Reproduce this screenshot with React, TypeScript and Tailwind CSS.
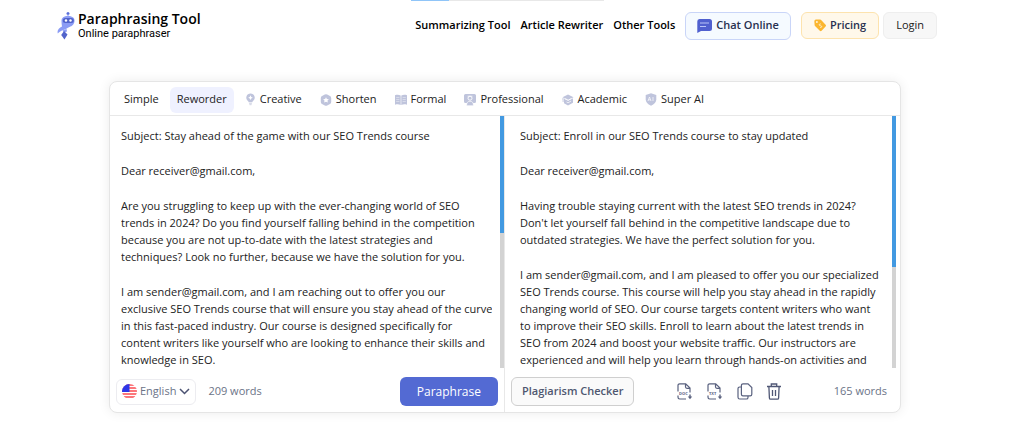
import { useState, type ReactNode } from "react";

const ICON = "#bfc4dc";

const leftText = [
  "Subject: Stay ahead of the game with our SEO Trends course",
  "Dear receiver@gmail.com,",
  "Are you struggling to keep up with the ever-changing world of SEO\ntrends in 2024? Do you find yourself falling behind in the competition\nbecause you are not up-to-date with the latest strategies and\ntechniques? Look no further, because we have the solution for you.",
  "I am sender@gmail.com, and I am reaching out to offer you our\nexclusive SEO Trends course that will ensure you stay ahead of the curve\nin this fast-paced industry. Our course is designed specifically for\ncontent writers like yourself who are looking to enhance their skills and\nknowledge in SEO.",
];

const rightText = [
  "Subject: Enroll in our SEO Trends course to stay updated",
  "Dear receiver@gmail.com,",
  "Having trouble staying current with the latest SEO trends in 2024?\nDon't let yourself fall behind in the competitive landscape due to\noutdated strategies. We have the perfect solution for you.",
  "I am sender@gmail.com, and I am pleased to offer you our specialized\nSEO Trends course. This course will help you stay ahead in the rapidly\nchanging world of SEO. Our course targets content writers who want\nto improve their SEO skills. Enroll to learn about the latest trends in\nSEO from 2024 and boost your website traffic. Our instructors are\nexperienced and will help you learn through hands-on activities and",
];

function Logo() {
  return (
    <svg width="18" height="28" viewBox="0 0 18 28" aria-hidden="true">
      <circle cx="11" cy="1.500" r="1.500" fill="#5a6fd8" />
      <path d="M10.500 2h1v4h-1z" fill="#8b9cf0" />
      <path d="M4.500 9C4.500 5.500 7 4 11 4s6.500 1.500 6.500 4.500c0 4-2.500 5.500-5 6.500-2.500 1-3 2-5.500 2.800C4 18.800 2 20 .8 21.500c-1-3.500 1.200-5.500 4.200-7C4.700 12.500 4.500 10.800 4.500 9z" fill="#8b9cf5" />
      <rect x="5.800" y="6" width="11" height="5" rx="2.500" fill="#5264cb" />
      <circle cx="9" cy="8.500" r="1.200" fill="#fff" />
      <circle cx="13.500" cy="8.500" r="1.200" fill="#fff" />
      <path d="M5.500 18.500l4-1.500.5 2.500-3 1z" fill="#8b9cf5" />
      <path d="M7 19l3.500 3.500-3 5L4.200 23z" fill="#5264cb" />
    </svg>
  );
}

function BulbIcon() {
  return (
    <svg width="11" height="13" viewBox="0.500 0 11 14" aria-hidden="true">
      <path d="M6 .5a4.500 4.500 0 0 0-2.700 8.100c.6.500.7.900.7 1.400h4c0-.5.1-.9.700-1.400A4.500 4.500 0 0 0 6 .5z" fill={ICON} />
      <path d="M6 2.500l.8 1.700 1.700.8-1.700.8L6 7.500l-.8-1.700L3.500 5l1.700-.8z" fill="#fff" />
      <path d="M4.300 10.500h3.400L7 13.200H5z" fill="#d9dce9" />
    </svg>
  );
}

function HexIcon() {
  return (
    <svg width="12" height="12" viewBox="0 0 12 12" aria-hidden="true">
      <path d="M4.800.5a2.400 2.400 0 0 1 2.400 0l2.800 1.600a2.200 2.200 0 0 1 1.200 2v3.800a2.200 2.200 0 0 1-1.200 2l-2.800 1.600a2.400 2.400 0 0 1-2.400 0L2 9.900a2.200 2.200 0 0 1-1.200-2V4.100A2.200 2.200 0 0 1 2 2.100z" fill={ICON} />
      <path d="M6 3.200l.9 1.700 2 .3-1.400 1.400.3 2L6 7.700l-1.800.9.3-2-1.400-1.400 2-.3z" fill="#fff" />
    </svg>
  );
}

function BookIcon() {
  return (
    <svg width="12" height="12" viewBox="0 0 12 12" aria-hidden="true">
      <path d="M0 1.200C2 .5 4 .6 5.700 1.500v9.500C4 10.200 2 10.100 0 10.800zM12 1.200C10 .5 8 .6 6.300 1.500v9.500c1.700-.8 3.700-.9 5.700-.2z" fill={ICON} />
      <path d="M1.200 3.500h3.200M1.200 5.500h3.200M1.200 7.500h3.200M7.600 3.500h3.200M7.600 5.500h3.200M7.600 7.500h3.200" stroke="#f1f2f8" strokeWidth=".5" />
    </svg>
  );
}

function ProfessionalIcon() {
  return (
    <svg width="12" height="12" viewBox="0 0 12 12" aria-hidden="true">
      <path d="M1.500 0h9A1.500 1.500 0 0 1 12 1.500v6A1.500 1.500 0 0 1 10.500 9h-9A1.500 1.500 0 0 1 0 7.500v-6A1.500 1.500 0 0 1 1.500 0z" fill={ICON} />
      <circle cx="6" cy="4.200" r="2" fill={ICON} stroke="#fff" strokeWidth=".9" />
      <path d="M2.500 11.800c0-3.300 1.500-4.600 3.500-4.600s3.500 1.300 3.500 4.600z" fill={ICON} stroke="#fff" strokeWidth=".7" />
      <path d="M3.500 2.200h5" stroke="#fff" strokeWidth=".6" />
    </svg>
  );
}

function AcademicIcon() {
  return (
    <svg width="12" height="12" viewBox="0 0 12 12" aria-hidden="true">
      <path d="M6 .5l5.500 2.700L6 6 .5 3.200z" fill={ICON} />
      <path d="M2 4.800l4 2 5-2.600v4.500L6 11.500 2 9.300z" fill={ICON} />
      <path d="M3 4.500l3.300 1.700L9 4.700M4.500 8l1.500.8 3-1.700" stroke="#fff" strokeWidth=".7" fill="none" />
      <path d="M0 5h2.500M.3 7h2" stroke={ICON} strokeWidth="1" />
    </svg>
  );
}

function ShieldIcon() {
  return (
    <svg width="12" height="13" viewBox="0 0 12 13" aria-hidden="true">
      <path d="M6 .3l5.300 1.700v4.200c0 3-2 5.100-5.300 6.500C2.700 11.300.7 9.200.7 6.200V2z" fill={ICON} />
      <path d="M3 8l1.500-4L6 8M3.600 6.800h1.800M8 4v4" stroke="#fff" strokeWidth=".7" fill="none" />
    </svg>
  );
}

function ChatIcon() {
  return (
    <svg width="15" height="14" viewBox="0 0 15 14" aria-hidden="true">
      <path d="M2.500 0h10A2.500 2.500 0 0 1 15 2.500v7a2.500 2.500 0 0 1-2.500 2.500H4L.3 14V2.500A2.400 2.400 0 0 1 2.500 0z" fill="#5060cf" />
      <path d="M3 4h9M3 7.500h6" stroke="#b9c4f8" strokeWidth="1.200" />
    </svg>
  );
}

function TagIcon() {
  return (
    <svg width="12" height="13" viewBox="0 0 12 13" aria-hidden="true">
      <path d="M.3 1.800L1.600.6 5.800.4a1.500 1.500 0 0 1 1.100.4l4.700 5a1.200 1.200 0 0 1 0 1.700l-4 4.300a1.300 1.300 0 0 1-1.800 0L1 7A1.500 1.500 0 0 1 .6 6z" fill="#fbb62f" />
      <circle cx="2.900" cy="3" r=".9" fill="#fff7e6" />
      <path d="M6.800 5c-1-.5-2 .5-1.400 1.300.6.700 1.700.2 2.200.9.500.8-.6 1.700-1.500 1.200" stroke="#fff7e6" strokeWidth=".8" fill="none" />
    </svg>
  );
}

function FlagIcon() {
  return (
    <svg width="15" height="15" viewBox="0 0 15 15" aria-hidden="true">
      <clipPath id="flag">
        <circle cx="7.500" cy="7.500" r="7.500" />
      </clipPath>
      <g clipPath="url(#flag)">
        <path d="M0 0h15v15H0z" fill="#fff" />
        <path d="M0 1h15M0 4h15M0 7h15M0 10h15M0 13h15" stroke="#fb4a50" strokeWidth="1.600" />
        <path d="M0 0h7.500v8H0z" fill="#2d36e8" />
      </g>
    </svg>
  );
}

function FileIcon({ label }: { label: string }) {
  return (
    <svg width="16" height="17" viewBox="0 0 16 17" fill="none" stroke="#59617f" strokeWidth="1.200" aria-hidden="true">
      <path d="M1 8.500V2.500A1.700 1.700 0 0 1 2.700.8h6l4.300 4.300v4.400M8.500 1v2.800A1.500 1.500 0 0 0 10 5.300h3M1 12.500v1.800A1.700 1.700 0 0 0 2.700 16H9" />
      <path d="M13 11.500v3" strokeWidth="1.400" />
      <path d="M10.800 13.500h4.400L13 16.200z" fill="#59617f" stroke="none" />
      <text x="2" y="12" fontSize="4" fontWeight="700" fill="#59617f" stroke="none">
        {label}
      </text>
    </svg>
  );
}

function CopyIcon() {
  return (
    <svg width="16" height="17" viewBox="0 0 16 17" fill="none" stroke="#59617f" strokeWidth="1.200" aria-hidden="true">
      <path d="M6 .8h5l3.800 3.800v6.600a1.600 1.600 0 0 1-1.600 1.600H6a1.600 1.600 0 0 1-1.600-1.600V2.400A1.600 1.600 0 0 1 6 .8z" />
      <path d="M4.200 4H2.600A1.600 1.600 0 0 0 1 5.600v8.600A1.800 1.800 0 0 0 2.800 16h6.600a1.600 1.600 0 0 0 1.600-1.600v-1.300" />
    </svg>
  );
}

function TrashIcon() {
  return (
    <svg width="14" height="17" viewBox="0 0 14 17" fill="none" stroke="#4f5775" strokeWidth="1.300" aria-hidden="true">
      <path d="M0 3.500h14M4.300 3.300V1h5.400v2.300M1.900 3.800l.5 11.200a1.200 1.200 0 0 0 1.200 1.200h6.800a1.200 1.200 0 0 0 1.200-1.200l.5-11.200M5.500 7v6M8.500 7v6" />
    </svg>
  );
}

const modes: { name: string; icon?: ReactNode }[] = [
  { name: "Simple" },
  { name: "Reworder" },
  { name: "Creative", icon: <BulbIcon /> },
  { name: "Shorten", icon: <HexIcon /> },
  { name: "Formal", icon: <BookIcon /> },
  { name: "Professional", icon: <ProfessionalIcon /> },
  { name: "Academic", icon: <AcademicIcon /> },
  { name: "Super AI", icon: <ShieldIcon /> },
];

function TextPane({
  paragraphs,
  thumb,
  className,
}: {
  paragraphs: string[];
  thumb: string;
  className: string;
}) {
  return (
    <div className={`flex h-[252px] justify-between ${className}`}>
      <div className="flex flex-col gap-[18px] overflow-hidden pt-[11px] text-[11px] leading-[17px] text-[#222]">
        {paragraphs.map((p) => (
          <p key={p} className="whitespace-pre">
            {p}
          </p>
        ))}
      </div>
      <div className="w-1 shrink-0 bg-[#d3d3d3]">
        <div className={`bg-[#4299e1] ${thumb}`} />
      </div>
    </div>
  );
}

export default function App() {
  const [mode, setMode] = useState("Reworder");

  return (
    <div className="bg-white pb-[18px] font-['Open_Sans','Noto_Sans',sans-serif] text-[11px] text-[#222]">
      <div className="mr-[420px] ml-[411px] flex h-px bg-[#e8e8e8]">
        <div className="w-[38px] bg-[#90c5f8]" />
      </div>
      <header className="flex h-[49px] items-center justify-between pr-[87px] pl-[57px]">
        <a href="#" className="flex items-center gap-[3px] text-black">
          <Logo />
          <span className="flex flex-col">
            <span className="text-[14px] leading-[17px] font-semibold">Paraphrasing Tool</span>
            <span className="font-[Roboto,sans-serif] text-[11px] leading-[14px]">Online paraphraser</span>
          </span>
        </a>
        <nav className="flex items-center gap-2.5 font-semibold text-black">
          <a href="#">Summarizing Tool</a>
          <a href="#">Article Rewriter</a>
          <a href="#">Other Tools</a>
          <a
            href="#"
            className="flex h-7 items-center gap-1 rounded-md border border-[#c9d5f8] bg-[#f5faff] px-[11px] text-[#28304f]"
          >
            <ChatIcon />
            Chat Online
          </a>
          <a
            href="#"
            className="flex h-[27px] items-center gap-1 rounded-md border border-[#fde3ae] bg-[#fff8ea] px-3 text-[#28304f]"
          >
            <TagIcon />
            Pricing
          </a>
          <a
            href="#"
            className="-ml-1.5 flex h-[27px] items-center rounded-md border border-[#eeeeee] bg-[#f7f7f7] px-3 font-normal text-[#222]"
          >
            Login
          </a>
        </nav>
      </header>

      <main className="mt-[31px] mr-[123px] ml-[109px] rounded-lg border border-[#e5e5e5] bg-white shadow-[0_0_12px_rgba(0,0,0,0.08)]">
        <div className="flex h-[34px] items-center gap-1 border-b border-[#e8e8e8] pt-0.5 pl-[7px]">
          {modes.map((m) => (
            <button
              key={m.name}
              type="button"
              onClick={() => setMode(m.name)}
              className={`flex h-[26px] items-center gap-1 rounded-md px-[7px] ${
                m.name === mode ? "bg-[#eff1ff]" : ""
              }`}
            >
              {m.icon}
              {m.name}
            </button>
          ))}
        </div>

        <div className="grid grid-cols-2">
          <section className="border-r border-[#e8e8e8]">
            <TextPane paragraphs={leftText} thumb="h-[117px]" className="pl-[11px]" />
            <div className="flex h-11 items-center pt-[3px] pr-1.5 pl-1.5 text-[#6b7387]">
              <button
                type="button"
                className="flex h-[26px] items-center gap-[3px] rounded-md border border-[#ececf0] px-[5px]"
              >
                <FlagIcon />
                English
                <svg width="11" height="7" viewBox="0 0 11 7" fill="none" stroke="#4b5272" strokeWidth="1.500" aria-hidden="true">
                  <path d="M1 1l4.500 4.500L10 1" />
                </svg>
              </button>
              <span className="ml-3">209 words</span>
              <button
                type="button"
                className="ml-auto h-[29px] rounded-md bg-[#536ad3] px-[17px] text-[12px] text-white"
              >
                Paraphrase
              </button>
            </div>
          </section>

          <section>
            <TextPane paragraphs={rightText} thumb="h-[151px]" className="pr-1 pl-[15px]" />
            <div className="flex h-11 items-center pt-[3px] pr-[13px] pl-1.5 text-[#6b7387]">
              <button
                type="button"
                className="h-[29px] rounded-md border border-[#cfcfcf] bg-[#fafafa] px-2.5 font-semibold text-[#4f5770]"
              >
                Plagiarism Checker
              </button>
              <div className="ml-[43px] flex items-center gap-3.5">
                <button type="button" aria-label="Download DOC">
                  <FileIcon label="DOC" />
                </button>
                <button type="button" aria-label="Download TXT">
                  <FileIcon label="TXT" />
                </button>
                <button type="button" aria-label="Copy">
                  <CopyIcon />
                </button>
                <button type="button" aria-label="Delete">
                  <TrashIcon />
                </button>
              </div>
              <span className="ml-auto">165 words</span>
            </div>
          </section>
        </div>
      </main>
    </div>
  );
}
